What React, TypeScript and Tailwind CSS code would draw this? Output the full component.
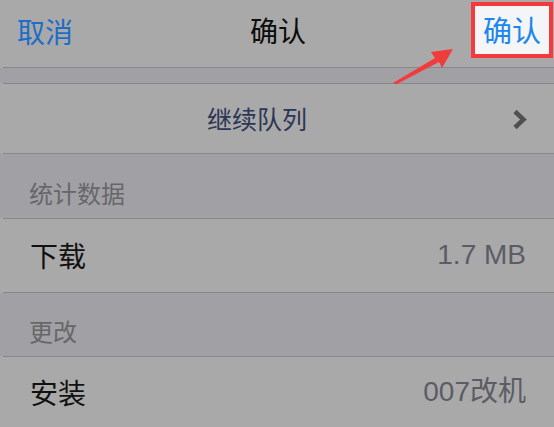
const font = { fontFamily: '"Noto Sans CJK SC", "Noto Sans", sans-serif' };
const latin = { fontFamily: '"Liberation Sans", "Noto Sans CJK SC", sans-serif' };

const Line = () => <div className="h-px bg-[#88888c] ml-[3px]" />;

const SectionHeader = ({ title, height }: { title: string; height: string }) => (
  <div className={`bg-[#a1a1a5] flex items-end pl-[29px] pb-[13px] ${height}`}>
    <span className="text-[24px] leading-none text-[#676769]">{title}</span>
  </div>
);

const Row = ({ label, value, height }: { label: string; value: string; height: string }) => (
  <div className={`bg-[#a9a9a9] flex items-center justify-between pl-[30px] pr-[28px] ${height}`}>
    <span className="text-[28px] leading-none text-[#111]">{label}</span>
    <span className="text-[28px] leading-none text-[#5c5c66]" style={latin}>{value}</span>
  </div>
);

export default function App() {
  return (
    <div className="w-[554px] h-[427px] overflow-hidden bg-[#a9a9a9] flex flex-col" style={font}>
      <div className="relative h-[67px] shrink-0 bg-[#a9a9a9] flex items-center justify-between pl-[17px]">
        <span className="text-[28px] leading-none text-[#1f6dc6] -mt-[6px]">取消</span>
        <span className="absolute left-[250px] top-[16px] text-[28px] leading-none text-[#0c0c0c]">确认</span>
        <div className="absolute right-[1px] top-[2px] w-[82px] h-[56px] border-4 border-[#f43a3c] bg-[#f4f5f7] flex items-center justify-center">
          <span className="text-[29px] leading-none text-[#1a86ee] -mt-[2px]">确认</span>
        </div>
        <svg className="absolute left-[390px] top-[44px]" width="70" height="44" viewBox="0 0 70 44">
          <path d="M3 39 L45 14 L41 8 L63 5 L52 24 L49 18 L5 41 Z" fill="#f23b3b" />
        </svg>
      </div>
      <Line />
      <div className="h-[15px] shrink-0 bg-[#a1a1a5]" />
      <Line />
      <div className="h-[69px] shrink-0 bg-[#a9a9a9] relative flex items-center">
        <span className="absolute left-[207px] top-[22px] text-[25px] leading-none text-[#2c3656]">继续队列</span>
        <svg className="absolute left-[511px] top-[25px]" width="17" height="21" viewBox="0 0 17 21">
          <path d="M4 2.5 L12.5 10.5 L4 18.5" stroke="#505050" strokeWidth="4.5" fill="none" />
        </svg>
      </div>
      <Line />
      <SectionHeader title="统计数据" height="h-[64px]" />
      <Line />
      <Row label="下载" value="1.7 MB" height="h-[73px]" />
      <Line />
      <SectionHeader title="更改" height="h-[64px]" />
      <Line />
      <Row label="安装" value="007改机" height="h-[70px]" />
    </div>
  );
}
